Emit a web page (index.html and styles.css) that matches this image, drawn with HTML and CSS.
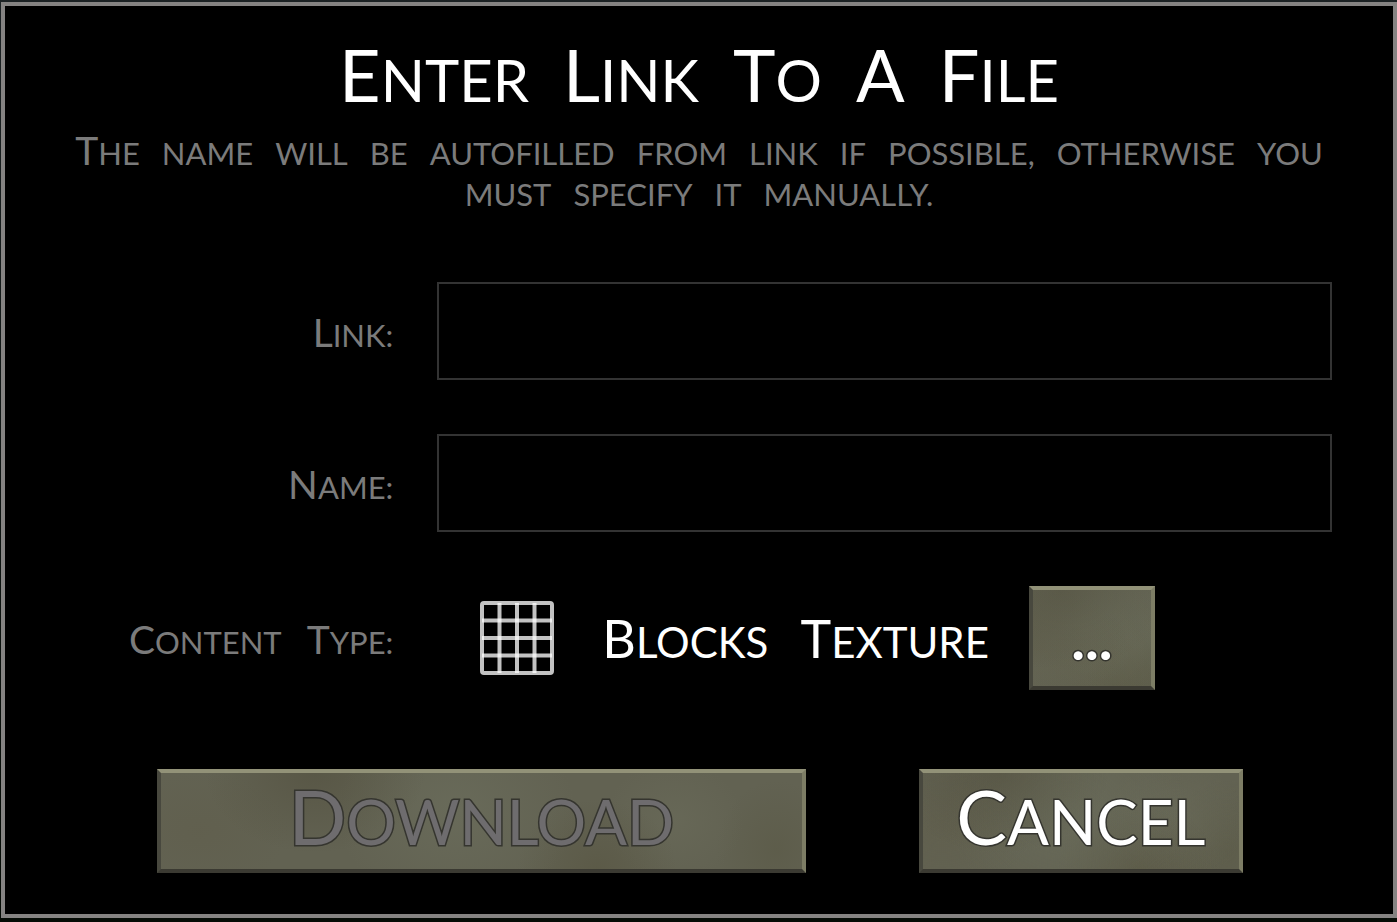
FILE: index.html
```html
<!DOCTYPE html>
<html lang="en">
<head>
    <meta charset="UTF-8">
    <meta name="viewport" content="width=device-width, initial-scale=1.0">
    <title>Enter Link To A File</title>
    <link rel="stylesheet" href="styles.css">
</head>
<body>
    <form class="dialog">
        <h1 class="title caps">
            <span class="word">Enter</span>
            <span class="word">Link</span>
            <span class="word">To</span>
            <span class="word">A</span>
            <span class="word">File</span>
        </h1>
        <p class="hint caps">
            <span class="word">The</span>
            <span>name</span>
            <span>will</span>
            <span>be</span>
            <span>autofilled</span>
            <span>from</span>
            <span>link</span>
            <span>if</span>
            <span>possible,</span>
            <span>otherwise</span>
            <span>you</span>
            <span>must</span>
            <span>specify</span>
            <span>it</span>
            <span>manually.</span>
        </p>

        <div class="fields">
            <label class="label caps" for="link"><span class="word">Link:</span></label>
            <input class="input" type="text" id="link">

            <label class="label caps" for="name"><span class="word">Name:</span></label>
            <input class="input" type="text" id="name">

            <label class="label caps" for="type"><span class="word">Content</span> <span class="word">Type:</span></label>
            <div class="type">
                <svg class="type-icon" viewBox="0 0 74 74" aria-hidden="true">
                    <g fill="none" stroke="#fff" stroke-opacity="0.76" stroke-width="4">
                        <rect x="2" y="2" width="70" height="70" rx="2"/>
                        <path d="M19.5 2V72M37 2V72M54.5 2V72"/>
                        <path d="M2 19.5H72M2 37H72M2 54.5H72"/>
                    </g>
                </svg>
                <span class="type-name caps"><span class="word">Blocks</span> <span class="word">Texture</span></span>
                <button class="btn btn-more" type="button" id="type">...</button>
            </div>
        </div>

        <div class="actions">
            <button class="btn caps" type="submit" disabled><span class="word">Download</span></button>
            <button class="btn caps" type="button"><span class="word">Cancel</span></button>
        </div>
    </form>
</body>
</html>
```
FILE: styles.css
```css
:root {
    --frame: #858382;
    --muted: #7b7b7b;
    --field: #333333;
    --stone: #626252;
    --text: #ffffff;
}

* {
    box-sizing: border-box;
}

body {
    margin: 0;
    padding: 2px 0 4px 1px;
    min-height: 100vh;
    display: flex;
    font-family: Lato, sans-serif;
    background: linear-gradient(#1c2224, #050b05);
    color: var(--text);
}

.dialog {
    flex: 1;
    border: 4px solid var(--frame);
    background: #000;
    padding-top: 26px;
}

/* Capitals with a larger initial on each word */
.caps {
    text-transform: uppercase;
}

.word {
    display: inline-block;
}

.title {
    margin: 0;
    display: flex;
    flex-wrap: wrap;
    justify-content: center;
    gap: 0 34px;
    font-size: 58px;
    font-weight: 400;
    line-height: 84px;
}

.title .word::first-letter {
    font-size: 72px;
}

.hint {
    margin: 8px 64px 0;
    display: flex;
    flex-wrap: wrap;
    justify-content: center;
    align-items: baseline;
    gap: 0 22px;
    font-size: 31px;
    line-height: 41px;
    color: var(--muted);
}

.hint .word::first-letter,
.label .word::first-letter {
    font-size: 39px;
}

.fields {
    margin-top: 67px;
    padding: 0 61px 0 63px;
    display: grid;
    grid-template-columns: 4fr 11fr;
    gap: 54px 44px;
    align-items: center;
}

.label {
    display: flex;
    justify-content: flex-end;
    gap: 25px;
    padding-top: 4px;
    font-size: 31px;
    line-height: 48px;
    color: var(--muted);
}

.input {
    width: 100%;
    height: 98px;
    padding: 0 20px;
    border: 2px solid var(--field);
    background: #000;
    color: var(--text);
    font: 42px Lato, sans-serif;
}

.type {
    display: flex;
    align-items: center;
    padding-left: 43px;
}

.type-icon {
    width: 74px;
    height: 74px;
}

.type-name {
    display: flex;
    gap: 32px;
    margin: 0 40px 0 48px;
    padding-top: 4px;
    font-size: 42px;
    line-height: 60px;
}

.type-name .word::first-letter {
    font-size: 52px;
}

.btn {
    height: 104px;
    padding: 0 0 6px;
    border: 4px solid;
    border-color: #929278 #7d7d65 #3b3a32 #48483e;
    background:
        radial-gradient(ellipse 110px 80px at 24% 0%, rgba(74, 70, 52, 0.4), transparent),
        radial-gradient(ellipse 90px 60px at 6% 60%, rgba(94, 90, 70, 0.3), transparent),
        radial-gradient(ellipse 120px 100px at 46% 40%, rgba(112, 116, 98, 0.45), transparent),
        radial-gradient(ellipse 80px 70px at 68% 100%, rgba(82, 78, 56, 0.4), transparent),
        radial-gradient(ellipse 70px 60px at 80% 50%, rgba(110, 112, 94, 0.4), transparent),
        radial-gradient(ellipse 60px 70px at 96% 80%, rgba(82, 80, 58, 0.3), transparent),
        var(--stone);
    color: var(--text);
    font: 62px/84px Lato, sans-serif;
    -webkit-text-stroke: 3px #35352f;
    paint-order: stroke fill;
}

.btn .word::first-letter {
    font-size: 76px;
}

.btn:disabled {
    color: #6e6c6e;
}

.btn-more {
    width: 126px;
    padding: 0;
    font-size: 58px;
    font-weight: 700;
}

.actions {
    margin-top: 79px;
    padding: 0 150px 0 152px;
    display: grid;
    grid-template-columns: 2fr 1fr;
    gap: 113px;
}
```
